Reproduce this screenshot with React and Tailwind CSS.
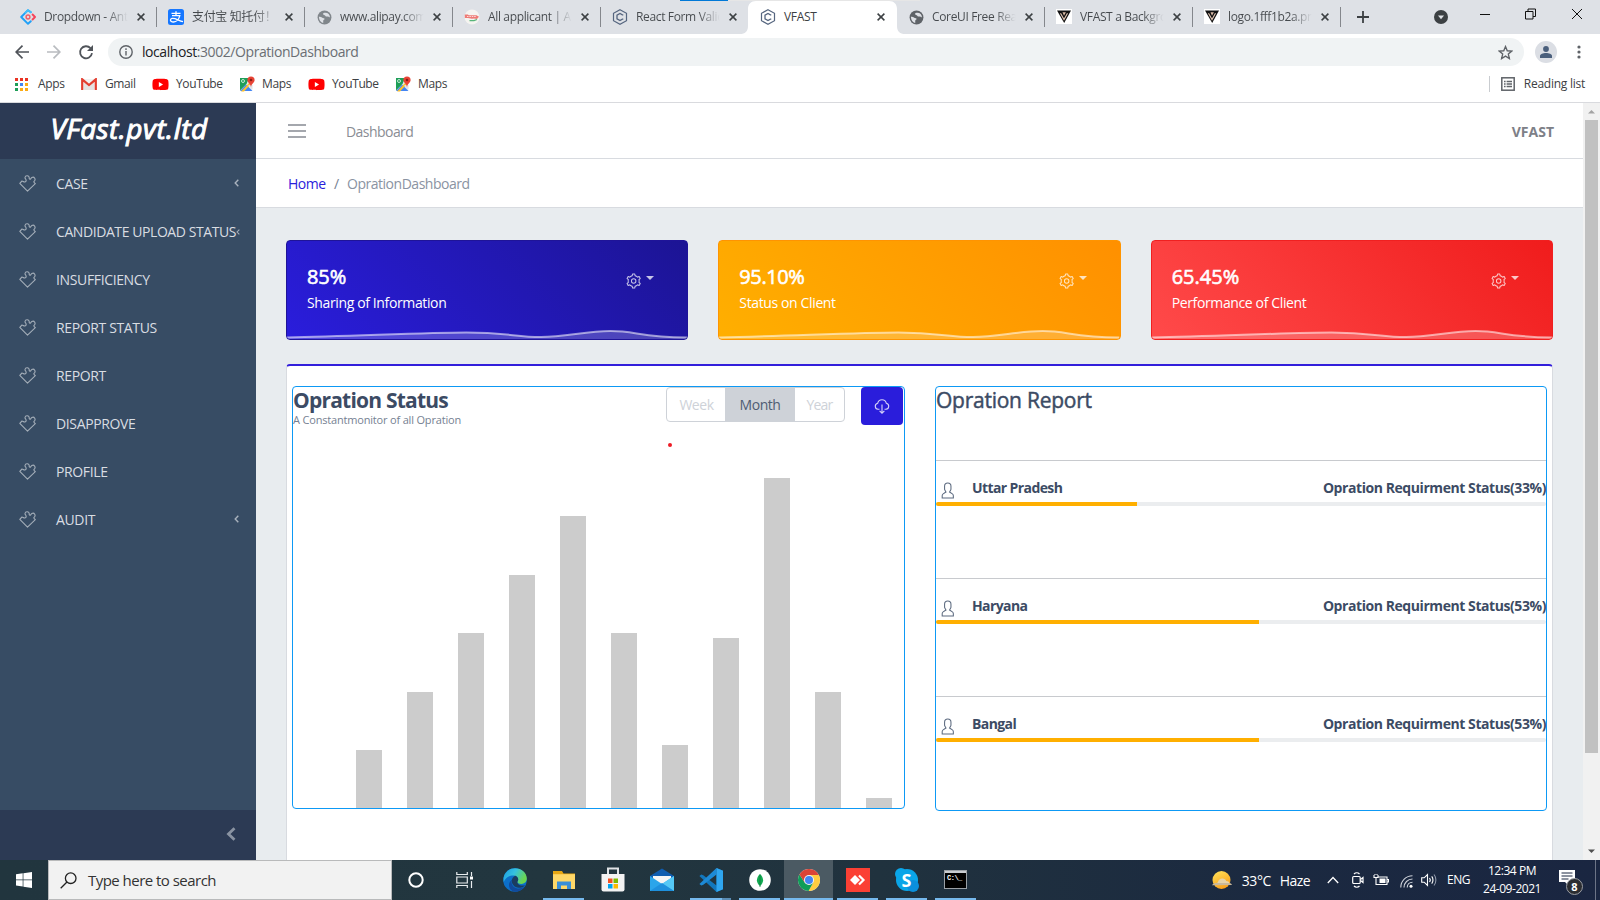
import { FaYoutube } from 'react-icons/fa';

/* ---------- shared data ---------- */

const TABS = [
  { title: 'Dropdown - Ant', icon: 'antd', sep: true },
  { title: '支付宝 知托付！', icon: 'alipay', sep: true },
  { title: 'www.alipay.com', icon: 'globe', sep: true },
  { title: 'All applicant | A', icon: 'applicant', sep: true },
  { title: 'React Form Valid', icon: 'coreui', sep: false },
  { title: 'VFAST', icon: 'coreui', active: true },
  { title: 'CoreUI Free Rea', icon: 'globeDark', sep: true },
  { title: 'VFAST a Backgro', icon: 'vfast', sep: true },
  { title: 'logo.1fff1b2a.pn', icon: 'vfast', sep: true },
];

const NAV = [
  { label: 'CASE', arrow: true },
  { label: 'CANDIDATE UPLOAD STATUS', arrow: true, clipped: true },
  { label: 'INSUFFICIENCY' },
  { label: 'REPORT STATUS' },
  { label: 'REPORT' },
  { label: 'DISAPPROVE' },
  { label: 'PROFILE' },
  { label: 'AUDIT', arrow: true },
];

const STATS = [
  { value: '85%', label: 'Sharing of Information', tone: 'border-[#1f1498] bg-[linear-gradient(45deg,#2a1ddc_0%,#1c1494_100%)]', valueTrack: 'tracking-[-0.1px]' },
  { value: '95.10%', label: 'Status on Client', tone: 'border-[#ff9400] bg-[linear-gradient(45deg,#ffaf00_0%,#ff9000_100%)]', valueTrack: 'tracking-[-0.4px]' },
  { value: '65.45%', label: 'Performance of Client', tone: 'border-[#f02020] bg-[linear-gradient(45deg,#ff4a4a_0%,#f01c1c_100%)]', valueTrack: 'tracking-[0px]' },
];

const BARS = [58, 116, 175, 233, 292, 175, 63, 170, 330, 116, 10];

const REGIONS = [
  { name: 'Uttar Pradesh', pct: 33 },
  { name: 'Haryana', pct: 53 },
  { name: 'Bangal', pct: 53 },
];

/* ---------- icons ---------- */

function Globe({ color }) {
  return (
    <svg viewBox="0 0 16 16" className="size-[15px]">
      <circle cx="8" cy="8" r="7.4" fill={color} />
      <path d="M2 7.2c1.800 0 2.600.3 3.600 1 .9.700 2.600.3 2.500 1.500-.1.900-1.500.9-1.500 1.900 0 .8.3 1.400-.1 2.300C4 13.300 2.200 11 2 7.200M8 3c-1.500.2-2 1.400-1 2.100.8.600 1.500.3 2 1.300.4.900 1.600.6 2.400.6.900.1 1.300.9 2.400.6C13.800 5 11.500 2.500 8 3z" fill="#dee1e6" />
    </svg>
  );
}

function TabIcon({ kind }) {
  switch (kind) {
    case 'antd':
      return (
        <svg viewBox="0 0 16 16" className="size-4" fill="none" strokeLinejoin="round" strokeLinecap="round">
          <path d="M10.800 3.300 8 1.200 1.200 8 8 14.800l2.800-2.600" stroke="#1fa0f7" strokeWidth="1.900" />
          <path d="M10.800 3.300 8 1.200 5.500 3.700" stroke="#45c0fa" strokeWidth="1.900" />
          <path d="M12.600 5.500 15 8l-2.400 2.500" stroke="#f5455b" strokeWidth="1.900" />
          <circle cx="8" cy="8" r="1.900" stroke="#f0606c" strokeWidth="1.500" />
        </svg>
      );
    case 'alipay':
      return (
        <svg viewBox="0 0 16 16" className="size-4">
          <rect width="16" height="16" rx="2.500" fill="#1677ff" />
          <path d="M3.500 4.300h9M8 2.300v4.300M4 6.700h7.800c-.7 3.400-3.300 6.300-6.300 6.300-2.200 0-3.200-1.100-3-2.200.3-1.500 2.300-1.900 4.500-1.100 2.300.8 5 2.100 8 3" fill="none" stroke="#fff" strokeWidth="1.300" />
        </svg>
      );
    case 'globe':
      return <Globe color="#80868b" />;
    case 'globeDark':
      return <Globe color="#5f6368" />;
    case 'applicant':
      return (
        <svg viewBox="0 0 16 16" className="size-4">
          <circle cx="8" cy="8" r="7.500" fill="#f5f4f0" />
          <path d="M.8 5.500h3l1 .8h7.700l2.500 1.400-2 2.300-3-.6-2 .4-4-.8H.8z" fill="#ee7b76" />
          <path d="M3 7.500h9.500" stroke="#fbdcda" strokeWidth="1" strokeDasharray="1.500 .9" />
          <path d="M5.500 11.700h4.500l3-1.200" stroke="#58b57a" strokeWidth="1.300" fill="none" />
        </svg>
      );
    case 'coreui':
      return (
        <svg viewBox="0 0 16 16" className="size-4" fill="none" stroke="#55657f">
          <path d="M8 .7 14.500 4.300v7.400L8 15.300 1.500 11.700V4.300z" strokeWidth="1.200" />
          <path d="M10.900 6.300v-.2L8 4.500 5 6.200v3.600l3 1.700 2.900-1.600v-.2" strokeWidth="1.300" />
        </svg>
      );
    default:
      return (
        <svg viewBox="0 0 16 16" className="size-4">
          <rect width="16" height="15" fill="#fff" />
          <path d="M1 1.500h14L8.200 14z" fill="#111" />
          <path d="M4.500 4.200 8 10.500l3.500-6.300" fill="none" stroke="#e3c6b4" strokeWidth="1.100" />
          <path d="M6.500 3.200h3.400L8 6.800z" fill="#d9b9a4" />
        </svg>
      );
  }
}

function Close() {
  return (
    <svg viewBox="0 0 8 8" className="size-[8px] text-[#3c4043]">
      <path d="M.6.6l6.800 6.800M7.400.6.6 7.400" stroke="currentColor" strokeWidth="1.500" />
    </svg>
  );
}

function GmailIcon() {
  return (
    <svg viewBox="0 0 16 12" className="h-[12px] w-4">
      <path d="M.5 1h15v10.500H.5z" fill="#f2f2f2" />
      <path d="M3 4.500 8 9l5-4.500V12H3z" fill="#e4e2e2" />
      <path d="M1.200 12V1.300L8 7l6.800-5.700V12" fill="none" stroke="#e33e30" strokeWidth="2.200" />
    </svg>
  );
}

function MapsIcon() {
  return (
    <svg viewBox="0 0 16 16" className="size-4">
      <path d="M1 2h12v13H1z" fill="#e8eaed" />
      <path d="M1 2h9L7.500 8 1 14.500z" fill="#1e9e58" />
      <path d="M1 15 7 8.500l6.500 6.500z" fill="#4285f4" />
      <path d="M2 15.500 10 7l1.500 1.500-6.500 7z" fill="#fbc02d" />
      <path d="M9 9l4.500 4.500V9z" fill="#dfe1e5" />
      <circle cx="4" cy="5" r="1.500" fill="none" stroke="#d6f0e0" strokeWidth=".9" />
      <path d="M12 .5a3.600 3.600 0 0 0-3.600 3.600C8.400 6.800 11.500 7.500 12 11c.5-3.500 3.600-4.200 3.600-6.900A3.600 3.600 0 0 0 12 .5z" fill="#e84335" />
      <circle cx="12" cy="4" r="1.300" fill="#8c1d16" />
    </svg>
  );
}

function YouTubeIcon() {
  return (
    <span className="flex size-4 items-center justify-center">
      <FaYoutube className="size-[17px] shrink-0 text-[#ff0000]" />
    </span>
  );
}

function PuzzleIcon() {
  return (
    <svg viewBox="0 0 17 17" className="size-[17px]" fill="none" stroke="#a3adb8" strokeWidth="1.100" strokeLinejoin="round">
      <path d="M.8 8.300 3 6c1.100.1 1.700 1.300 2.900 1 1.300-.4 1.500-1.500 1-2.600-.5-1-1-.8-.9-1.900.2-1.200 1.200-1.900 2.300-1.800 1.300.1 2 1.300 1.900 2.400-.1.900.7 1.300 1.400.9.500-.3.5-1.100 1.200-1.500 1-.6 2.300-.3 2.900.7.600 1 .4 2.100-.4 2.900-.7.700-.6 1 .2 1.700l.8.9L8.500 16.200z" />
    </svg>
  );
}

function Gear() {
  return (
    <svg viewBox="0 0 512 512" className="size-4" fill="currentColor">
      <path d="M245.151,168a88,88,0,1,0,88,88A88.100,88.100,0,0,0,245.151,168Zm0,144a56,56,0,1,1,56-56A56.063,56.063,0,0,1,245.151,312Z" />
      <path d="M464.700,322.319l-31.770-26.153a193.081,193.081,0,0,0,0-80.332l31.770-26.153a19.941,19.941,0,0,0,4.606-25.439l-32.612-56.483a19.936,19.936,0,0,0-24.337-8.730l-38.561,14.447a192.038,192.038,0,0,0-69.540-40.192L297.490,32.713A19.936,19.936,0,0,0,277.762,16H212.540a19.937,19.937,0,0,0-19.728,16.712L186.050,73.284a192.030,192.030,0,0,0-69.540,40.192L77.945,99.027a19.937,19.937,0,0,0-24.334,8.731L21,164.245a19.940,19.940,0,0,0,4.610,25.438l31.767,26.151a193.081,193.081,0,0,0,0,80.332l-31.770,26.153A19.942,19.942,0,0,0,21,347.758l32.612,56.483a19.937,19.937,0,0,0,24.337,8.730l38.562-14.447a192.030,192.030,0,0,0,69.540,40.192l6.762,40.571A19.937,19.937,0,0,0,212.540,496h65.222a19.936,19.936,0,0,0,19.728-16.712l6.763-40.572a192.038,192.038,0,0,0,69.540-40.192l38.564,14.449a19.938,19.938,0,0,0,24.334-8.731L469.300,347.755A19.939,19.939,0,0,0,464.700,322.319Zm-50.636,57.120-48.109-18.024-7.285,7.334a159.955,159.955,0,0,1-72.625,41.973l-10,2.636L267.600,464h-44.890l-8.442-50.642-10-2.636a159.955,159.955,0,0,1-72.625-41.973l-7.285-7.334L76.241,379.439,53.800,340.562l39.629-32.624-2.700-9.973a160.900,160.900,0,0,1,0-83.930l2.700-9.972L53.800,171.439l22.446-38.878,48.109,18.024,7.285-7.334a159.955,159.955,0,0,1,72.625-41.973l10-2.636L222.706,48H267.600l8.442,50.642,10,2.636a159.955,159.955,0,0,1,72.625,41.973l7.285,7.334,48.109-18.024,22.447,38.877-39.629,32.625,2.700,9.972a160.900,160.900,0,0,1,0,83.930l-2.700,9.973,39.629,32.623Z" />
    </svg>
  );
}

function UserIcon() {
  return (
    <svg viewBox="0 0 512 512" className="size-[17px]" fill="#5d6b80">
      <path d="M411.600,343.656l-72.823-47.334,27.455-50.334A80.230,80.230,0,0,0,376,207.681V128a112,112,0,0,0-224,0v79.681a80.236,80.236,0,0,0,9.768,38.308l27.455,50.333L116.400,343.656A79.725,79.725,0,0,0,80,410.732V496H448V410.732A79.727,79.727,0,0,0,411.600,343.656ZM416,464H112V410.732a47.836,47.836,0,0,1,21.841-40.246l97.660-63.479-41.640-76.341A48.146,48.146,0,0,1,184,207.681V128a80,80,0,0,1,160,0v79.681a48.146,48.146,0,0,1-5.861,22.985L296.500,307.007l97.662,63.479h0A47.836,47.836,0,0,1,416,410.732Z" />
    </svg>
  );
}

/* ---------- browser chrome ---------- */

function TabStrip() {
  return (
    <div className="flex h-[34px] shrink-0 items-stretch bg-[#dee1e6] pl-2">
      {TABS.map((t, i) => (
        <div key={i} className="relative flex w-[148px] items-center pl-3">
          {t.active && (
            <svg viewBox="0 0 165 33" className="absolute -left-2 top-px h-[33px] w-[165px]">
              <path d="M0 33c5 0 8-2.500 8-8V8c0-5 3-8 8-8h133c5 0 8 3 8 8v17c0 5.500 3 8 8 8z" fill="#fff" />
            </svg>
          )}
          <span className="relative flex size-4 shrink-0 items-center justify-center">
            <TabIcon kind={t.icon} />
          </span>
          <span
            className={
              t.active
                ? 'relative ml-2 w-[92px] whitespace-nowrap text-[12px] leading-4 tracking-[-0.3px] text-[#3c4043]'
                : 'ml-2 w-[92px] whitespace-nowrap bg-[linear-gradient(90deg,#45494d_68%,transparent_91%)] bg-clip-text text-[12px] leading-4 tracking-[-0.35px] text-transparent'
            }
          >
            {t.title}
          </span>
          <span className="relative ml-[1px] flex">
            <Close />
          </span>
          {t.sep && <span className="absolute -right-px top-[7px] h-[20px] w-px bg-[#84878c]" />}
        </div>
      ))}
      <div className="flex flex-1 items-center">
        <svg viewBox="0 0 12 12" className="ml-[17px] size-3">
          <path d="M6 0v12M0 6h12" stroke="#3c4043" strokeWidth="1.800" />
        </svg>
        <svg viewBox="0 0 14 14" className="ml-[65px] size-[14px]">
          <circle cx="7" cy="7" r="7" fill="#3c4043" />
          <path d="M4 5.500h6L7 9.300z" fill="#dee1e6" />
        </svg>
        <svg viewBox="0 0 102 12" className="mb-[6px] ml-8 h-3 w-[102px]" fill="none" stroke="#111">
          <path d="M0 6.500h10" />
          <path d="M45.500 3.500h7.500v7.500h-7.500zM48 3.500V1h7.500v7.500H53" />
          <path d="M92 1l10 10M102 1 92 11" />
        </svg>
      </div>
    </div>
  );
}

function Toolbar() {
  return (
    <div className="flex h-[36px] shrink-0 items-center bg-white pl-[15px] pr-[19px]">
      <svg viewBox="0 0 80 16" className="h-4 w-20 shrink-0" fill="none" strokeWidth="1.700">
        <path d="M14 8H1.500M7.500 1.700 1.200 8l6.300 6.300" stroke="#50545a" />
        <path d="M32 8h12.500M38.500 1.700 44.800 8l-6.300 6.300" stroke="#b9bcc0" />
        <path d="M75.500 4.200A6 6 0 1 0 77 9.200" stroke="#50545a" strokeWidth="1.800" />
        <path d="M78 1v6h-6z" fill="#50545a" />
      </svg>
      <div className="ml-[13px] flex h-[28px] flex-1 items-center rounded-full bg-[#f0f3f4] pl-[11px] pr-[11px]">
        <svg viewBox="0 0 14 14" className="size-[14px]" fill="none" stroke="#5f6368" strokeWidth="1.400">
          <circle cx="7" cy="7" r="6.200" />
          <path d="M7 6v4.500M7 3.300v1.600" />
        </svg>
        <span className="ml-[9px] text-[14px] leading-5 tracking-[-0.43px] text-[#6a6e73]">
          <span className="text-[#202124]">localhost</span>:3002/OprationDashboard
        </span>
        <svg viewBox="0 0 24 24" className="ml-auto size-[15px]" fill="none" stroke="#5f6368" strokeWidth="2.200">
          <path d="m12 2.500 2.800 6.700 7.200.6-5.500 4.700 1.700 7.100L12 17.800l-6.200 3.800 1.700-7.100L2 9.800l7.200-.6z" />
        </svg>
      </div>
      <span className="ml-[11px] flex size-[22px] items-center justify-center rounded-full bg-[#dbdee4]">
        <svg viewBox="0 0 12 12" className="size-[12px]" fill="#4a5f7c">
          <circle cx="6" cy="3" r="2.900" />
          <path d="M0 12V9.800c0-1.700 3-2.800 6-2.800s6 1.100 6 2.800V12z" />
        </svg>
      </span>
      <svg viewBox="0 0 4 14" className="ml-[20px] h-[14px] w-1" fill="#5f6368">
        <circle cx="2" cy="2" r="1.600" />
        <circle cx="2" cy="7" r="1.600" />
        <circle cx="2" cy="12" r="1.600" />
      </svg>
    </div>
  );
}

function Bookmarks() {
  const text = 'text-[12px] leading-4 tracking-[-0.38px] text-[#3c4043]';
  return (
    <div className="flex h-[33px] shrink-0 items-center border-b border-[#d9dade] bg-white pb-[4px] pl-[15px] pr-[15px]">
      <svg viewBox="0 0 13 13" className="size-[13px]">
        <path d="M0 0h3v3H0zM5 0h3v3H5zM10 0h3v3h-3z" fill="#ea3323" />
        <path d="M0 5h3v3H0zM0 10h3v3H0z" fill="#1e9e58" />
        <path d="M5 5h3v3H5z" fill="#4285f4" />
        <path d="M10 5h3v3h-3zM5 10h3v3H5zM10 10h3v3h-3z" fill="#fbab15" />
      </svg>
      <span className={text + ' ml-[10px] w-[43px]'}>Apps</span>
      <GmailIcon />
      <span className={text + ' ml-2 w-[47px]'}>Gmail</span>
      <YouTubeIcon />
      <span className={text + ' ml-2 w-[63px]'}>YouTube</span>
      <MapsIcon />
      <span className={text + ' ml-[7px] w-[46px]'}>Maps</span>
      <YouTubeIcon />
      <span className={text + ' ml-2 w-[63px]'}>YouTube</span>
      <MapsIcon />
      <span className={text + ' ml-[7px]'}>Maps</span>
      <span className="ml-auto h-4 w-px bg-[#c9ccd0]" />
      <svg viewBox="0 0 14 14" className="ml-[11px] size-[14px]" fill="none" stroke="#5f6368">
        <rect x=".8" y=".8" width="12.400" height="12.400" strokeWidth="1.500" />
        <path d="M3 4.500h1.600M3 7h1.600M3 9.500h1.600M5.600 4.500H11M5.600 7H11M5.600 9.500H11" strokeWidth="1.300" />
      </svg>
      <span className="ml-[9px] text-[12px] leading-4 tracking-[-0.25px] text-[#3c4043]">Reading list</span>
    </div>
  );
}

/* ---------- dashboard ---------- */

function Sidebar() {
  return (
    <aside className="flex w-[256px] shrink-0 flex-col bg-[#374c64]">
      <div className="flex h-[56px] shrink-0 items-center justify-center bg-[#2c3a54] pb-[6px] pl-[2px]">
        <span className="text-[28px] italic leading-8 tracking-[0.5px] text-white [-webkit-text-stroke:1px_#fff]">VFast.pvt.ltd</span>
      </div>
      <nav className="flex flex-1 flex-col pt-px">
        {NAV.map((n) => (
          <div key={n.label} className="flex h-12 shrink-0 items-center pl-[19px] pr-[17px]">
            <span className="mb-[2px] mr-5 flex shrink-0">
              <PuzzleIcon />
            </span>
            <span
              className={
                n.clipped
                  ? 'whitespace-nowrap text-[14px] leading-5 tracking-[-0.42px] text-[#d9dde2]'
                  : 'whitespace-nowrap text-[14px] leading-5 tracking-[-0.36px] text-[#d9dde2]'
              }
            >
              {n.label}
            </span>
            {n.arrow && (
              <svg viewBox="0 0 5 8" className={n.clipped ? 'ml-auto h-[6px] w-[4px] shrink-0' : 'mb-[2px] ml-auto h-2 w-[5px] shrink-0'}>
                <path d="M4.300.8 1.200 4l3.100 3.200" fill="none" stroke="#a9b2bd" strokeWidth="1.400" />
              </svg>
            )}
          </div>
        ))}
      </nav>
      <div className="flex h-[50px] shrink-0 items-center justify-end bg-[#2c3a54] pb-[2px] pr-[20px]">
        <svg viewBox="0 0 10 14" className="h-[14px] w-[10px]">
          <path d="M8.500 1.300 2.500 7l6 5.700" fill="none" stroke="#8a93a2" strokeWidth="2.800" />
        </svg>
      </div>
    </aside>
  );
}

function StatCard({ stat }) {
  return (
    <div className={'relative flex h-[100px] flex-1 overflow-hidden rounded-[4px] border text-white ' + stat.tone}>
      <div className="pl-5 pt-[21px]">
        <div className={'text-[20px] leading-[30px] [-webkit-text-stroke:0.6px_#fff] ' + stat.valueTrack}>{stat.value}</div>
        <div className="text-[14px] leading-[21px] tracking-[-0.37px]">{stat.label}</div>
      </div>
      <div className="ml-auto flex items-start gap-1 pr-[33px] pt-[32px] text-white/75">
        <Gear />
        <svg viewBox="0 0 8 4" className="mt-[3px] h-1 w-2" fill="currentColor">
          <path d="M0 0h8L4 4z" />
        </svg>
      </div>
      <svg viewBox="0 0 402 12" preserveAspectRatio="none" className="absolute inset-x-0 bottom-0 h-3 w-full">
        <path d="M0 10.500C70 9 140 5.500 180 5.500s50 4.500 75 4.500S300 4 325 4 355 10 402 10.500V12H0z" fill="rgba(255,255,255,.2)" />
        <path d="M0 10.500C70 9 140 5.500 180 5.500s50 4.500 75 4.500S300 4 325 4 355 10 402 10.500" fill="none" stroke="rgba(255,255,255,.55)" strokeWidth="2" />
      </svg>
    </div>
  );
}

function StatusPanel() {
  return (
    <section className="relative flex h-[423px] w-[613px] flex-col rounded-[4px] border border-[#0d99f5]">
      <div className="flex h-[38px]">
        <div className="w-[373px]">
          <h4 className="mt-px text-[21px] font-bold leading-[24px] tracking-[-0.78px] text-[#3c4b64]">Opration Status</h4>
          <p className="mt-px text-[11px] leading-[14px] tracking-[-0.18px] text-[#768192]">A Constantmonitor of all Opration</p>
        </div>
        <div className="flex h-[35px] w-[179px] overflow-hidden rounded-[4px] border border-[#ced2d8] text-[14px] tracking-[-0.45px]">
          <span className="flex w-[58px] items-center justify-center pl-px text-[#ced2d8]">Week</span>
          <span className="flex w-[70px] items-center justify-center bg-[#ced2d8] text-[#4f5d73]">Month</span>
          <span className="flex flex-1 items-center justify-center tracking-[-0.8px] text-[#ced2d8]">Year</span>
        </div>
        <span className="ml-4 flex h-[38px] w-[42px] items-center justify-center rounded-[4px] bg-[#2a1ddb]">
          <svg viewBox="0 0 16 16" className="size-4" fill="none" stroke="#d5d2f8" strokeWidth="1.100">
            <path d="M5.500 11.300H4A3.100 3.100 0 0 1 3.700 5.200 4.400 4.400 0 0 1 12.300 5.200 3.100 3.100 0 0 1 12 11.300h-1.500" />
            <path d="M8 6.500v8.600M5.600 12.800 8 15.200l2.400-2.400" />
          </svg>
        </span>
      </div>
      <span className="absolute left-[375px] top-[56px] size-1 rounded-full bg-[#ee1c25]" />
      <div className="mt-auto flex items-end gap-[25px] pl-[63px]">
        {BARS.map((h, i) => (
          <div key={i} className="w-[26px] bg-[#cccccc]" style={{ height: h }} />
        ))}
      </div>
    </section>
  );
}

function ReportPanel() {
  return (
    <section className="flex h-[425px] w-[612px] flex-col rounded-[4px] border border-[#0d99f5]">
      <h4 className="h-[73px] shrink-0 pt-px text-[21px] leading-[24px] tracking-[-0.25px] text-[#3c4b64] [-webkit-text-stroke:0.45px_#3c4b64]">
        Opration Report
      </h4>
      {REGIONS.map((r) => (
        <div key={r.name} className="h-[118px] shrink-0 border-t border-[#c8cace] pt-[17px] last:h-[114px]">
          <div className="flex h-[24px] items-center pb-[4px] text-[14px] font-bold text-[#3c4b64]">
            <span className="ml-[3px] mt-[4px] flex w-[33px]">
              <UserIcon />
            </span>
            <span className="mb-[2px] tracking-[-0.6px]">{r.name}</span>
            <span className="mb-[2px] ml-auto tracking-[-0.43px]">Opration Requirment Status({r.pct}%)</span>
          </div>
          <div className="h-1 overflow-hidden rounded-[4px] bg-[#ebedef]">
            <div className="h-1 bg-[#ffaf00]" style={{ width: r.pct + '%' }} />
          </div>
        </div>
      ))}
    </section>
  );
}

function Dashboard() {
  return (
    <main className="flex min-w-0 flex-1 flex-col bg-[#e8ecef]">
      <header className="flex h-[56px] shrink-0 items-center border-b border-[#d8dbe0] bg-white pl-8 pr-[29px]">
        <svg viewBox="0 0 18 14" className="h-[14px] w-[18px]">
          <path d="M0 1h18M0 7h18M0 13h18" stroke="#878a92" strokeWidth="1.500" />
        </svg>
        <span className="ml-[40px] mt-[3px] text-[14px] leading-5 tracking-[-0.55px] text-[#8a8d94]">Dashboard</span>
        <span className="ml-auto mt-[3px] text-[14px] font-bold leading-5 text-[#7d8087]">VFAST</span>
      </header>
      <div className="flex h-[49px] shrink-0 items-center border-b border-[#d8dbe0] bg-white pl-8 pt-[2px] text-[14px] leading-5 tracking-[-0.48px]">
        <span className="w-[46px] text-[#2a1ddb]">Home</span>
        <span className="w-[13px] text-[#768192]">/</span>
        <span className="text-[#8a93a2]">OprationDashboard</span>
      </div>
      <div className="flex min-h-0 flex-1 flex-col overflow-hidden pl-[30px] pr-[30px] pt-8">
        <div className="flex shrink-0 gap-[30px]">
          {STATS.map((s) => (
            <StatCard key={s.value} stat={s} />
          ))}
        </div>
        <div className="mt-6 flex flex-1 items-start justify-between rounded-t-[4px] border-x border-t-2 border-x-[#d8dbe0] border-t-[#321fdb] bg-white pl-[5px] pr-[5px] pt-5">
          <StatusPanel />
          <ReportPanel />
        </div>
      </div>
    </main>
  );
}

function Scrollbar() {
  return (
    <div className="flex w-[17px] shrink-0 flex-col items-center bg-[#f1f1f1]">
      <svg viewBox="0 0 17 17" className="size-[17px]">
        <path d="M5 10.500h7L8.500 7z" fill="#a3a3a3" />
      </svg>
      <div className="h-[633px] w-[13px] bg-[#c1c1c1]" />
      <svg viewBox="0 0 17 17" className="mt-auto size-[17px]">
        <path d="M5 6.500h7L8.500 10z" fill="#505050" />
      </svg>
    </div>
  );
}

/* ---------- taskbar ---------- */

function AppIcon({ kind }) {
  switch (kind) {
    case 'cortana':
      return (
        <svg viewBox="0 0 16 16" className="mr-[2px] size-4">
          <circle cx="8" cy="8" r="6.700" fill="none" stroke="#fff" strokeWidth="2" />
        </svg>
      );
    case 'taskview':
      return (
        <svg viewBox="0 0 18 16" className="mr-[2px] h-4 w-[18px]" fill="none" stroke="#e8ecee" strokeWidth="1.200">
          <path d="M.8 0v2.500h10.500V0M.8 16v-2.500h10.500V16M.8 5h10.500v6H.8zM15.500 0v4M15.500 9v7" />
          <path d="M14 4.500h3v3h-3z" fill="#fff" stroke="none" />
        </svg>
      );
    case 'edge':
      return (
        <svg viewBox="0 0 24 24" className="size-6">
          <defs>
            <linearGradient id="edgeTop" x1="0" x2="1" y1="0" y2=".4">
              <stop offset="0" stopColor="#1b9de2" />
              <stop offset=".5" stopColor="#35c1e0" />
              <stop offset="1" stopColor="#6bd650" />
            </linearGradient>
          </defs>
          <circle cx="12" cy="12" r="11.800" fill="#0c6fc9" />
          <path d="M.6 10C1.500 4 6.300.2 12 .2c6.600 0 11.800 4.600 11.800 10.400 0 3.400-2.600 5.400-5.500 5.400-2.400 0-4-.9-4-1.900 0-.8.9-1.100.9-2.800 0-2-2-3.800-4.700-3.800C6.200 7.500 3 9.500.6 14z" fill="url(#edgeTop)" />
          <path d="M8.500 13.500c0 4.500 3.400 7 7.300 7 2.200 0 4.400-.9 5.700-1.900C19 22.500 15.500 23.900 12 23.800 8 23.500 6 20 6 17c0-2.500 1.200-4.200 3.500-5.600-.6.600-1 1.200-1 2.100z" fill="#114a9c" />
          <path d="M14.400 14.200c0-.8.800-1.100.8-2.900 0-1.500-1.200-2.900-3-3.500-2.200 1-3.400 3-3.400 5.200 0 3.500 2.700 6.500 6.800 6.800 2.500 0 5-.8 6.500-2.600-6 1.300-7.700-1.600-7.700-3z" fill="#1b3c60" />
        </svg>
      );
    case 'explorer':
      return (
        <svg viewBox="0 0 24 20" className="h-5 w-6">
          <path d="M1 1h9l1.500 2.500H23V19H1z" fill="#e8a713" />
          <path d="M1 4.200h22V19H1z" fill="#ffd868" />
          <path d="M5 19v-7.500h14V19h-4v-3.500H9V19z" fill="#3a8fd8" />
        </svg>
      );
    case 'store':
      return (
        <svg viewBox="0 0 24 26" className="h-[26px] w-6">
          <path d="M7 7V1.500h10V7" fill="none" stroke="#dfe3e6" strokeWidth="2" />
          <path d="M.5 7h23v15.500a2 2 0 0 1-2 2h-19a2 2 0 0 1-2-2z" fill="#f3f3f3" />
          <path d="M7 11.500h4.500V16H7z" fill="#f25022" />
          <path d="M12.500 11.500H17V16h-4.500z" fill="#7fba00" />
          <path d="M7 17h4.500v4.500H7z" fill="#00a4ef" />
          <path d="M12.500 17H17v4.500h-4.500z" fill="#ffb900" />
        </svg>
      );
    case 'mail':
      return (
        <svg viewBox="0 0 24 24" className="size-6">
          <path d="M0 8 12 .5 24 8v4H0z" fill="#0f5db0" />
          <path d="M3 8h18v8H3z" fill="#f5f5f5" />
          <path d="M0 8l12 8 12-8v15H0z" fill="#2ba5ea" />
          <path d="M12 16 24 8v15z" fill="#55c8f5" />
          <path d="M0 23l12-8 12 8z" fill="#1e90dd" />
        </svg>
      );
    case 'vscode':
      return (
        <svg viewBox="0 0 24 24" className="size-6">
          <path d="M17.500 0 24 2.800v18.400L17.500 24 2 9.500.4 8.100 2.300 6.500l2 .8L17.500 17.500z" fill="#1277bd" />
          <path d="M17.500 0v6.500L4.300 16.700l-2 .8L.4 15.900 2 14.500z" fill="#1d8ad6" />
          <path d="M17.500 0 24 2.800v18.400L17.500 24z" fill="#2fa6f0" />
        </svg>
      );
    case 'mongo':
      return (
        <svg viewBox="0 0 22 22" className="size-[22px]">
          <circle cx="11" cy="11" r="10.800" fill="#fff" />
          <path d="M11 5c4.200 4 4 9 0 12-4-3-4.200-8 0-12z" fill="#13aa52" />
          <path d="M11 5.500V18" stroke="#0e7c3c" strokeWidth=".8" />
        </svg>
      );
    case 'chrome':
      return (
        <svg viewBox="0 0 22 22" className="size-[22px]">
          <circle cx="11" cy="11" r="11" fill="#e8e8e8" />
          <path d="M11 6h9.800A11 11 0 0 1 10.500 22l4.800-8.500z" fill="#ffcd40" />
          <path d="M6.700 13.500 1.470 5.500A11 11 0 0 0 10.500 22l4.800-8.500z" fill="#0f9d58" />
          <path d="M1.470 5.500A11 11 0 0 1 20.800 6H11L6.700 13.500z" fill="#db4437" />
          <circle cx="11" cy="11" r="5" fill="#f4f4f4" />
          <circle cx="11" cy="11" r="4" fill="#4285f4" />
        </svg>
      );
    case 'anydesk':
      return (
        <svg viewBox="0 0 24 24" className="size-6">
          <path d="M0 0h24v24H0z" fill="#fb4034" />
          <path d="M4 12l5-5 5 5-5 5z" fill="#fff" />
          <path d="M13 7.500 17.500 12 13 16.500" fill="none" stroke="#fff" strokeWidth="2.200" />
        </svg>
      );
    case 'skype':
      return (
        <span className="relative flex size-[22px] items-center justify-center rounded-full bg-[#0aa5e8] text-[18px] font-bold leading-none text-white">
          <span className="absolute -left-px -top-px size-3 rounded-full bg-[#0aa5e8]" />
          <span className="absolute -bottom-px -right-px size-3 rounded-full bg-[#0b8fdc]" />
          <span className="relative">S</span>
        </span>
      );
    default:
      return (
        <span className="mb-px flex h-[19px] w-[23px] flex-col border border-[#9aa0a6] bg-black">
          <span className="h-[2px] bg-[#c9cdd1]" />
          <span className="pl-[2px] pt-px font-['Liberation_Mono',monospace] text-[7px] font-bold leading-[8px] tracking-[-0.5px] text-white">C:\_</span>
        </span>
      );
  }
}

const APPS = [
  { kind: 'cortana' },
  { kind: 'taskview' },
  { kind: 'edge' },
  { kind: 'explorer', open: true },
  { kind: 'store' },
  { kind: 'mail' },
  { kind: 'vscode', open: true, stacked: true },
  { kind: 'mongo', open: true },
  { kind: 'chrome', active: true },
  { kind: 'anydesk', open: true },
  { kind: 'skype', open: true },
  { kind: 'cmd', open: true },
];

function Tray() {
  const label = 'text-[12px] leading-[18px] tracking-[-0.46px]';
  return (
    <div className="ml-auto flex items-center text-white">
      <svg viewBox="0 0 20 20" className="mb-px size-5">
        <defs>
          <linearGradient id="sun" x1="0" x2=".5" y1="0" y2="1">
            <stop offset="0" stopColor="#ffe45c" />
            <stop offset="1" stopColor="#f9a11b" />
          </linearGradient>
        </defs>
        <circle cx="9.500" cy="10" r="9" fill="url(#sun)" />
        <path d="M6 12c.3-2.500 3-4 5-3.500 2 .3 3 1.600 3.200 2.500 2 0 3 .8 3 2H5z" fill="#e6d3a8" />
        <path d="M0 15.300c1-2 3-2.300 5-2.300h12c1.500 0 2.500.8 3 2z" fill="#c9b89a" />
      </svg>
      <span className="ml-[10px] text-[14px] tracking-[-0.45px]">33°C</span>
      <span className="ml-[9px] text-[14px] tracking-[-0.6px]">Haze</span>
      <svg viewBox="0 0 12 8" className="ml-[17px] h-2 w-3">
        <path d="M.8 7 6 1.500 11.200 7" fill="none" stroke="#fff" strokeWidth="1.300" />
      </svg>
      <svg viewBox="0 0 12 16" className="ml-[13px] h-4 w-3" fill="none" stroke="#fff" strokeWidth="1.200">
        <rect x=".7" y="4.500" width="7.500" height="7" rx="1" />
        <path d="M8.500 7.500 11 5.500v5L8.500 8.500M2 2c1.500-1.500 4-1.500 5.500 0M2 14c1.500 1.500 4 1.500 5.500 0" />
      </svg>
      <svg viewBox="0 0 16 12" className="ml-[9px] h-3 w-4" fill="none" stroke="#fff" strokeWidth="1.100">
        <path d="M5.500 3h8.500v7.500H5M14.500 5.500h1v2.500h-1M1 1v2.500h4V1M2 0v1M4 0v1M3 3.500v7h2" />
        <path d="M6.500 4.500h6V9h-6z" fill="#fff" stroke="none" />
      </svg>
      <svg viewBox="0 0 13 13" className="ml-[11px] mt-[2px] size-[13px]" fill="none" stroke="#cfd3db" strokeWidth="1.100">
        <path d="M.8 12.500C.8 6 6 .8 12.500.8M4 12.500c0-4.700 3.800-8.500 8.500-8.500M7.200 12.500c0-3 2.300-5.300 5.300-5.300" />
        <circle cx="11" cy="11.300" r="1.500" fill="#fff" stroke="none" />
      </svg>
      <svg viewBox="0 0 16 14" className="ml-[8px] h-[14px] w-4" fill="none" stroke="#fff" strokeWidth="1.100">
        <path d="M.7 4.800h2.500L6.500 1.500v11L3.200 9.200H.7zM8.500 5c.8 1 .8 3 0 4M10.700 3.300c1.700 2 1.700 5.400 0 7.400" />
        <path d="M13 1.500c2.500 3 2.500 8 0 11" stroke="#8e97a8" />
      </svg>
      <span className={label + ' ml-[10px]'}>ENG</span>
      <div className="ml-[11px] flex w-[62px] flex-col items-center">
        <span className={label}>12:34 PM</span>
        <span className={label}>24-09-2021</span>
      </div>
      <div className="relative ml-[16px] mr-[10px] h-5 w-[26px]">
        <svg viewBox="0 0 16 16" className="size-4">
          <path d="M0 0h16v12H9.500v3.500L6 12H0z" fill="#fff" />
          <path d="M2.500 3h11M2.500 6h11M2.500 9h7" stroke="#1b2740" />
        </svg>
        <span className="absolute left-[7px] top-[8px] flex size-[17px] items-center justify-center rounded-full border border-[#9a9da3] bg-[#2b2d31] text-[11px] font-bold leading-none">
          8
        </span>
      </div>
      <span className="mr-[4px] h-10 w-px bg-[#6c7486]" />
    </div>
  );
}

function Taskbar() {
  return (
    <footer className="flex h-[40px] shrink-0 bg-[linear-gradient(90deg,#21353e_0%,#22363f_35%,#20323e_55%,#1b2940_80%,#1a2641_100%)]">
      <div className="flex w-[48px] items-center justify-center">
        <svg viewBox="0 0 16 16" className="size-4" fill="#fff">
          <path d="M0 2.300 6.700 1.300v6.200H0zM7.400 1.200 16 0v7.500H7.400zM0 8.300h6.700v6.300L0 13.600zM7.400 8.300H16V16l-8.600-1.300z" />
        </svg>
      </div>
      <div className="flex w-[344px] items-center border border-[#b9babb] bg-[#f2f2f2] pl-[11px]">
        <svg viewBox="0 0 17 17" className="size-[17px]" fill="none" stroke="#222" strokeWidth="1.300">
          <circle cx="10.700" cy="6.200" r="5.300" />
          <path d="M7 10 .7 16.300" />
        </svg>
        <span className="ml-[11px] text-[15px] leading-5 tracking-[-0.53px] text-[#333]">Type here to search</span>
      </div>
      {APPS.map((a) => (
        <div
          key={a.kind}
          className={a.active ? 'relative flex w-[49px] items-center justify-center bg-[#4b5a63]' : 'relative flex w-[49px] items-center justify-center'}
        >
          <AppIcon kind={a.kind} />
          {a.open && !a.stacked && <span className="absolute inset-x-[4px] bottom-0 h-[2px] bg-[#76b9ed]" />}
          {a.stacked && (
            <span className="absolute inset-x-[4px] bottom-0 flex h-[2px]">
              <span className="w-[32px] bg-[#76b9ed]" />
              <span className="flex-1 bg-[#5a8cb4]" />
            </span>
          )}
          {a.active && <span className="absolute inset-x-0 bottom-0 h-[2px] bg-[#76b9ed]" />}
        </div>
      ))}
      <Tray />
    </footer>
  );
}

export default function App() {
  return (
    <div className="relative flex h-[900px] w-[1600px] flex-col overflow-hidden bg-white font-['Open_Sans','Noto_Sans_CJK_SC',sans-serif]">
      <TabStrip />
      <div className="absolute left-[680px] top-0 flex h-px w-[240px]">
        <span className="w-[48px] bg-[#0078d7]" />
        <span className="flex-1 bg-[#e6e6e6]" />
      </div>
      <Toolbar />
      <Bookmarks />
      <div className="flex min-h-0 flex-1">
        <Sidebar />
        <Dashboard />
        <Scrollbar />
      </div>
      <Taskbar />
    </div>
  );
}
